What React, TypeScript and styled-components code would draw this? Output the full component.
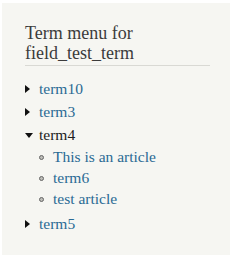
import React from "react";
import styled, { createGlobalStyle } from "styled-components";

const GlobalStyle = createGlobalStyle`
  html, body {
    margin: 0;
    padding: 0;
    background: #ffffff;
  }
  body {
    font-family: "Liberation Serif", "Times New Roman", serif;
  }
`;

const Block = styled.div`
  margin: 3px 2px 0 2px;
  height: 252px;
  box-sizing: border-box;
  background: #f6f6f2;
  padding: 20px 20px 0 23px;
`;

const Title = styled.h2`
  margin: 0;
  padding-bottom: 2px;
  border-bottom: 1px solid #d9d9d4;
  font-size: 18px;
  font-weight: normal;
  line-height: 20px;
  color: #3b3b3b;
`;

const Tree = styled.ul`
  list-style: none;
  margin: 12px 0 0 0;
  padding: 0;
`;

type ItemProps = { $open?: boolean };

const Item = styled.li<ItemProps>`
  position: relative;
  padding-left: 14px;
  font-size: 15.5px;
  line-height: 22px;
  margin-bottom: 1px;

  &::before {
    content: "";
    position: absolute;
    left: 0;
    width: 0;
    height: 0;
    ${({ $open }) =>
      $open
        ? `
      top: 9px;
      border-left: 4px solid transparent;
      border-right: 4px solid transparent;
      border-top: 5px solid #111;
    `
        : `
      top: 7px;
      border-top: 4px solid transparent;
      border-bottom: 4px solid transparent;
      border-left: 5px solid #111;
    `}
  }
`;

const SubTree = styled.ul`
  list-style: none;
  margin: 0 0 4px 0;
  padding: 0;
`;

const SubItem = styled.li`
  position: relative;
  padding-left: 14px;
  line-height: 21px;

  &::before {
    content: "";
    position: absolute;
    left: 0;
    top: 9px;
    width: 3px;
    height: 3px;
    border-radius: 50%;
    border: 1px solid #666;
    background: #bdbdb8;
  }
`;

const Link = styled.a`
  color: #2a6a94;
  text-decoration: none;
`;

const Current = styled.span`
  color: #1c1c1c;
`;

export default function App() {
  return (
    <>
      <GlobalStyle />
      <Block>
        <Title>
          Term menu for
          <br />
          field_test_term
        </Title>
        <Tree>
          <Item>
            <Link href="#">term10</Link>
          </Item>
          <Item>
            <Link href="#">term3</Link>
          </Item>
          <Item $open>
            <Current>term4</Current>
            <SubTree>
              <SubItem>
                <Link href="#">This is an article</Link>
              </SubItem>
              <SubItem>
                <Link href="#">term6</Link>
              </SubItem>
              <SubItem>
                <Link href="#">test article</Link>
              </SubItem>
            </SubTree>
          </Item>
          <Item>
            <Link href="#">term5</Link>
          </Item>
        </Tree>
      </Block>
    </>
  );
}
